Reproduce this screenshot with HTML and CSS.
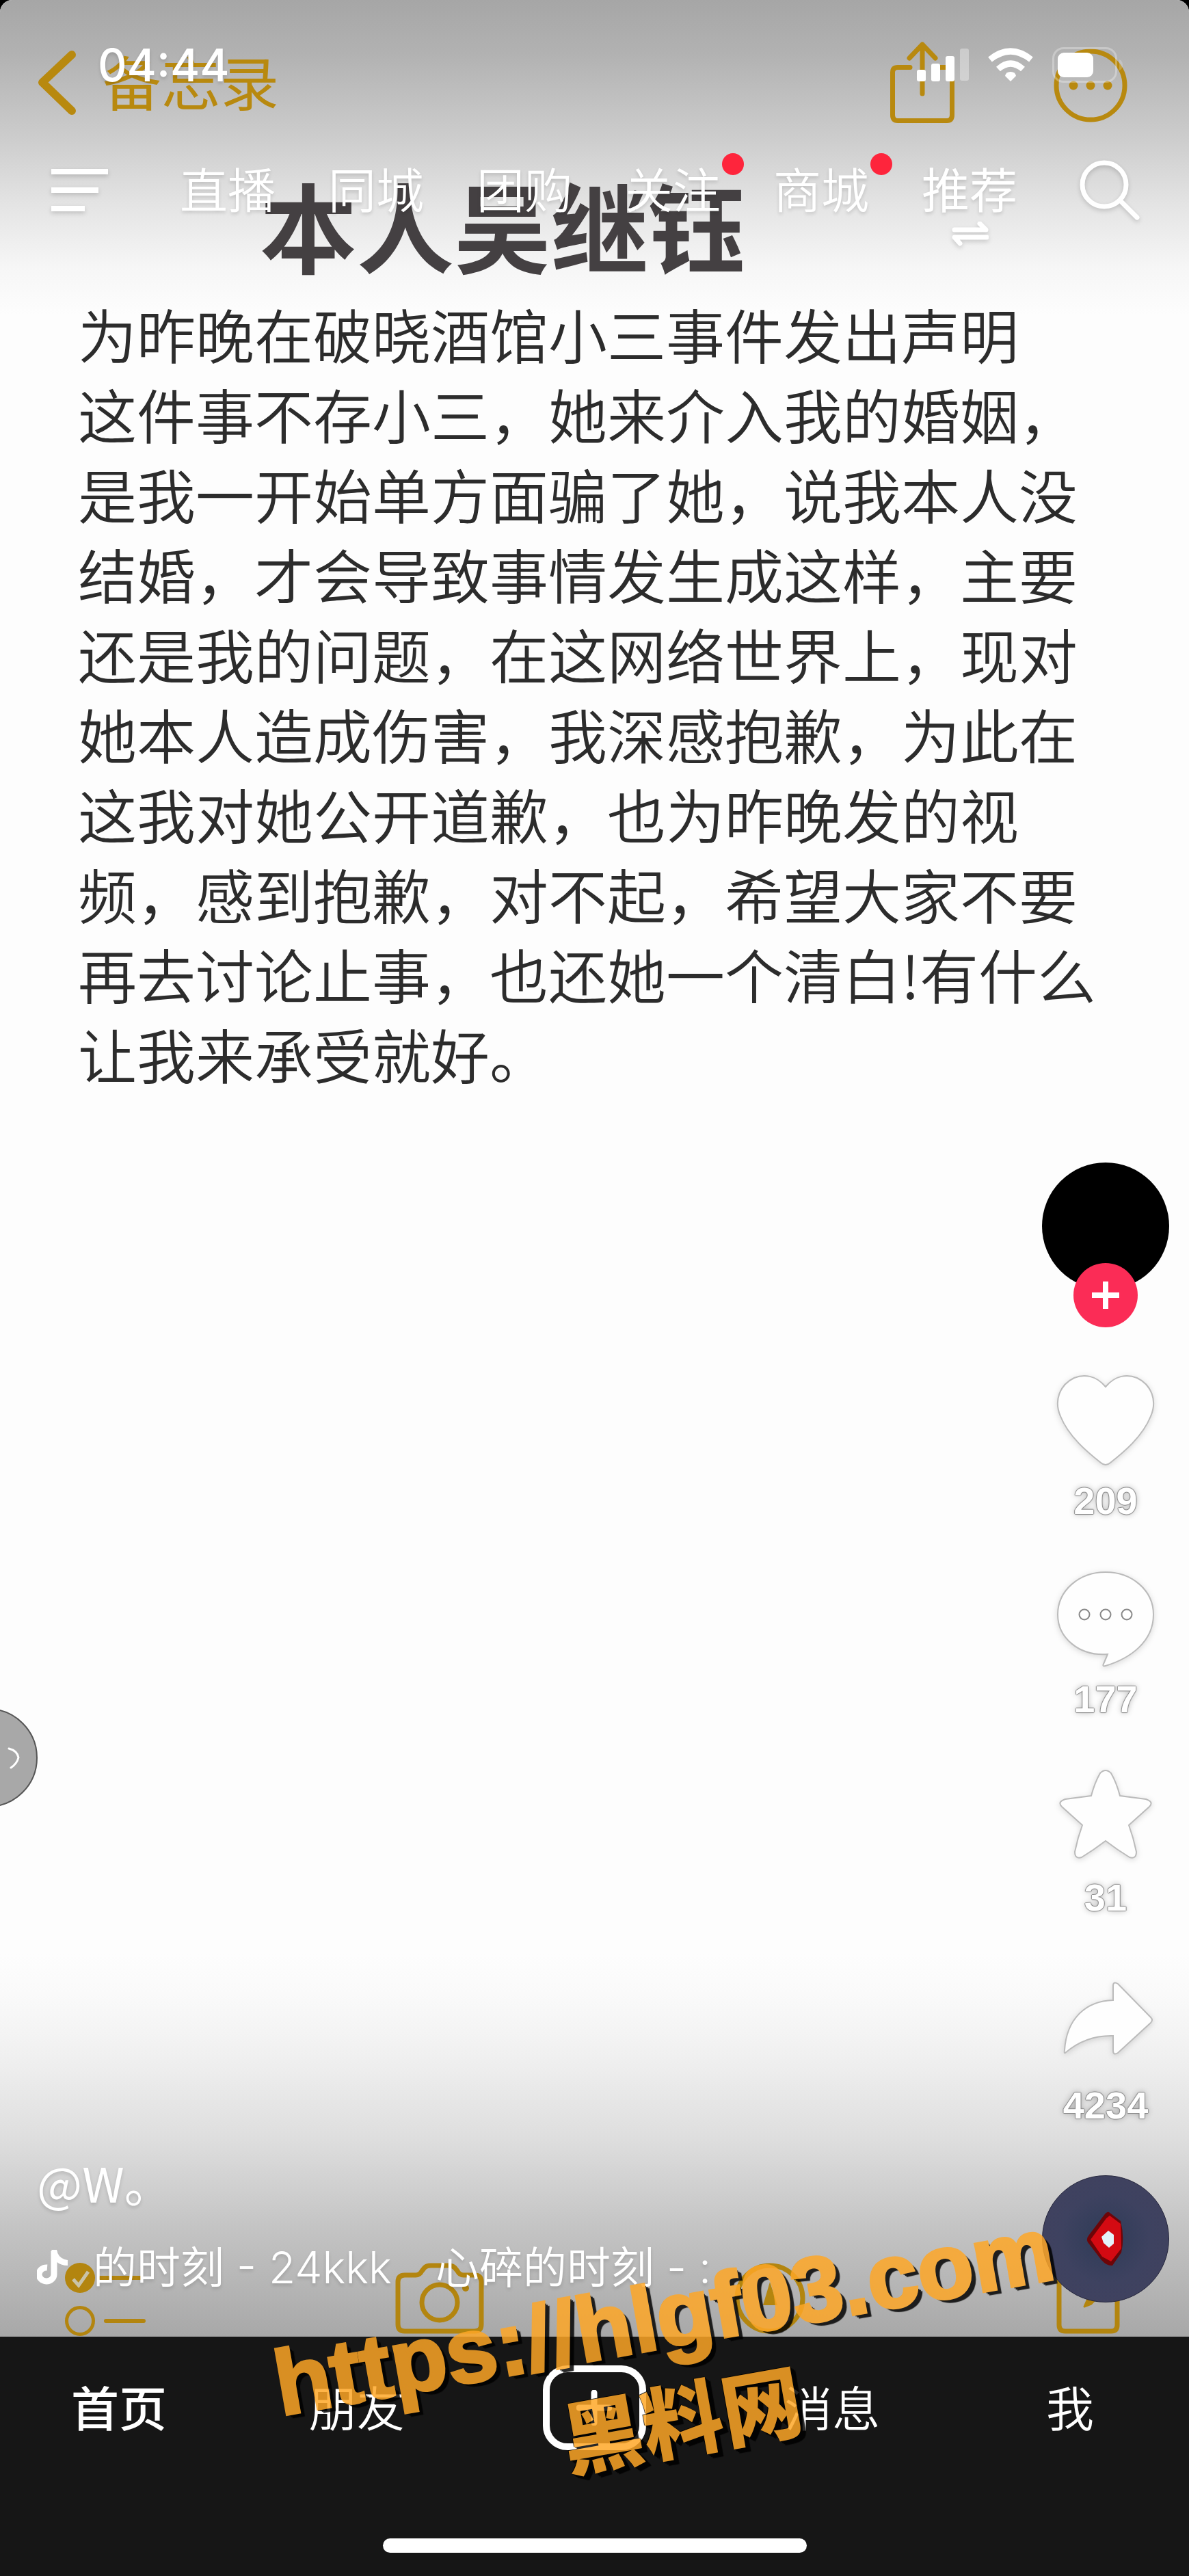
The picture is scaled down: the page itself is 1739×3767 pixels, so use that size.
FILE: index.html
```html
<!DOCTYPE html>
<html lang="zh-CN">
<head>
<meta charset="utf-8">
<meta name="viewport" content="width=device-width, initial-scale=1">
<title>本人吴继钰</title>
<link rel="stylesheet" href="styles.css">
</head>
<body>
<div class="screen">
  <main class="stage">
    <article class="note">
      <header class="note-bar">
        <button class="note-back" type="button">
          <svg width="58" height="96" viewBox="0 0 58 96" aria-hidden="true"><path d="M51 7 8 47.500 51 89" fill="none" stroke="currentColor" stroke-width="12" stroke-linecap="round" stroke-linejoin="round"/></svg>
          <span>备忘录</span>
        </button>
        <div class="note-actions">
          <button type="button" aria-label="分享备忘录">
            <svg width="96" height="120" viewBox="0 0 96 120" fill="none" stroke="currentColor" stroke-width="7" stroke-linecap="round" stroke-linejoin="round" aria-hidden="true"><path d="M30 37.500H12Q4.500 37.500 4.500 45V107Q4.500 115.500 12 115.500H84Q91.500 115.500 91.500 107V45Q91.500 37.500 84 37.500H66"/><path d="M48 76V4M29 24 48 4 67 24"/></svg>
          </button>
          <button type="button" aria-label="更多">
            <svg width="108" height="120" viewBox="0 -10 108 120" aria-hidden="true"><circle cx="54" cy="54" r="50" fill="none" stroke="currentColor" stroke-width="7"/><g fill="currentColor"><circle cx="29" cy="54" r="6.500"/><circle cx="54" cy="54" r="6.500"/><circle cx="79" cy="54" r="6.500"/></g></svg>
          </button>
        </div>
      </header>
      <h1 class="note-title">本人吴继钰</h1>
      <p class="note-text">为昨晚在破晓酒馆小三事件发出声明<br>这件事不存小三，她来介入我的婚姻，<br>是我一开始单方面骗了她，说我本人没<br>结婚，才会导致事情发生成这样，主要<br>还是我的问题，在这网络世界上，现对<br>她本人造成伤害，我深感抱歉，为此在<br>这我对她公开道歉，也为昨晚发的视<br>频，感到抱歉，对不起，希望大家不要<br>再去讨论止事，也还她一个清白!有什么<br>让我来承受就好。</p>
      <footer class="note-tools">
        <button type="button" aria-label="清单">
          <svg width="118" height="108" viewBox="0 0 118 108" fill="none" stroke="currentColor" aria-hidden="true"><circle cx="22" cy="22" r="22" fill="currentColor" stroke="none"/><path d="m12 24 8 9 14-20" stroke="#c9c3a8" stroke-width="5"/><circle cx="22" cy="85" r="19.500" stroke-width="5"/><path d="M52 22H110M60 85H115" stroke-width="6" stroke-linecap="round"/></svg>
        </button>
        <button type="button" aria-label="相机">
          <svg width="130" height="108" viewBox="0 0 130 108" fill="none" stroke="currentColor" stroke-width="7" stroke-linejoin="round" aria-hidden="true"><path d="M14 18H30Q36 18 39 12L43 7Q46 4 52 4H78Q84 4 87 7L91 12Q94 18 100 18H116Q126 18 126 28V90Q126 100 116 100H14Q4 100 4 90V28Q4 18 14 18Z"/><circle cx="65" cy="58" r="26"/><circle cx="103" cy="37" r="5" fill="currentColor" stroke="none"/></svg>
        </button>
        <button type="button" aria-label="标记">
          <svg width="105" height="108" viewBox="0 0 105 108" aria-hidden="true"><circle cx="52" cy="52" r="48" fill="none" stroke="currentColor" stroke-width="7"/><path d="M52 28 42 62H63Z" fill="currentColor"/></svg>
        </button>
        <button type="button" aria-label="新建备忘录">
          <svg width="98" height="108" viewBox="0 0 98 108" fill="none" stroke="currentColor" stroke-width="7" stroke-linecap="round" stroke-linejoin="round" aria-hidden="true"><path d="M56 14H14Q5 14 5 23V91Q5 100 14 100H81Q90 100 90 91V44"/><path d="m90 8-44 47-4 9 10-4 42-44Z" fill="currentColor" stroke-width="3"/></svg>
        </button>
      </footer>
    </article>

    <section class="player" aria-label="视频">
      <div class="status">
        <time class="clock">04:44</time>
        <div class="status-icons">
          <svg width="76" height="50" viewBox="0 0 76 50" fill="#fff" aria-hidden="true"><rect y="32" width="13" height="17" rx="3"/><rect x="21" y="23" width="13" height="26" rx="3"/><rect x="42" y="12" width="13" height="37" rx="3"/><rect x="63" y="1" width="13" height="47" rx="3" opacity=".35"/></svg>
          <svg width="66" height="50" viewBox="0 0 66 50" aria-hidden="true"><g fill="none" stroke="#fff" stroke-width="9"><path d="M3 17Q33-7 63 17"/><path d="M15 31Q33 15 51 31"/></g><path d="M33 49 25 41Q26 35 33 35T41 41Z" fill="#fff"/></svg>
          <svg width="104" height="52" viewBox="0 0 104 52" aria-hidden="true"><rect x="1.500" y="1.500" width="92" height="49" rx="15" fill="none" stroke="#fff" stroke-width="3" opacity=".3"/><path d="M98 18Q103 20 103 26T98 34Z" fill="#fff" opacity=".2"/><rect x="8" y="8" width="52" height="36" rx="9" fill="#fff"/></svg>
        </div>
      </div>

      <div class="feeds">
        <button type="button" aria-label="菜单">
          <svg class="soft" width="83" height="62" viewBox="0 0 83 62" fill="#fff" aria-hidden="true"><path d="M0 0H83V8H0ZM0 27H69V35H0ZM0 54H49V62H0Z"/></svg>
        </button>
        <nav class="feed-list" aria-label="频道">
          <a href="#live">直播</a>
          <a href="#city">同城</a>
          <a href="#deals">团购</a>
          <a class="has-dot" href="#following">关注</a>
          <a class="has-dot" href="#mall">商城</a>
          <a class="is-current" href="#foryou" aria-current="page">推荐
            <svg class="swap soft" width="54" height="36" viewBox="0 0 54 36" fill="none" stroke="#fff" stroke-width="7" stroke-linecap="round" stroke-linejoin="round" aria-hidden="true"><path d="M4 12H50L41 3M51 23H4L12 32"/></svg>
          </a>
        </nav>
        <button class="search" type="button" aria-label="搜索">
          <svg class="soft" width="88" height="90" viewBox="0 0 88 90" fill="none" stroke="#fff" stroke-width="7" stroke-linecap="round" aria-hidden="true"><circle cx="36" cy="37" r="32"/><path d="M60 61 84 85"/></svg>
        </button>
      </div>

      <button class="handle" type="button" aria-label="展开">
        <svg width="18" height="32" viewBox="0 0 18 32" aria-hidden="true"><path d="M2 2Q14 5 16 15 14 24 5 30" fill="none" stroke="#fff" stroke-width="3" stroke-linecap="round"/></svg>
      </button>

      <div class="lower">
        <div class="caption">
          <a class="author" href="#author">@W。</a>
          <a class="music" href="#music">
            <svg width="46" height="52" viewBox="0 0 46 52" aria-hidden="true"><path d="M25 2V36A11 10 0 1 1 15 26" fill="none" stroke="#fff" stroke-width="9"/><path d="M21 0H29Q31 13 45 15V23Q35 23 28 17Z" fill="#fff"/></svg>
            <span>的时刻 - 24kkk</span>
            <span>心碎的时刻 - :</span>
          </a>
        </div>

        <aside class="rail" aria-label="互动">
          <div class="avatar">
            <a class="avatar-pic" href="#author" aria-label="作者主页"></a>
            <button class="follow" type="button" aria-label="关注作者">
              <svg width="40" height="40" viewBox="0 0 40 40" aria-hidden="true"><path d="M20 0V40M0 20H40" stroke="#fff" stroke-width="8"/></svg>
            </button>
          </div>
          <button class="action" type="button" aria-label="点赞 209">
            <svg width="144" height="140" viewBox="0 0 144 140" aria-hidden="true"><path class="shape" d="M72 21C58 4 40 2 26 8 5 18-4 41 6 64 18 94 46 117 65 132Q72 138 79 132C98 117 126 94 138 64 148 41 139 18 118 8 104 2 86 4 72 21Z"/></svg>
            <span>209</span>
          </button>
          <button class="action" type="button" aria-label="评论 177">
            <svg width="144" height="140" viewBox="0 0 144 140" aria-hidden="true"><path class="shape" d="M72 2C111 2 142 29 142 64 142 104 108 128 72 139Q66 141 70 134L75 122C33 125 2 98 2 64 2 29 33 2 72 2Z"/><g fill="#fff" stroke="#888" stroke-width="2"><circle cx="41" cy="64" r="7.500"/><circle cx="72" cy="64" r="7.500"/><circle cx="103" cy="64" r="7.500"/></g></svg>
            <span>177</span>
          </button>
          <button class="action" type="button" aria-label="收藏 31">
            <svg width="144" height="140" viewBox="0 0 144 140" aria-hidden="true"><path class="shape" d="M64 6Q72-2 80 6 88 20 93 39L131 44Q143 48 136 55L106 82Q113 101 117 121 117 132 107 129 89 118 72 105 55 118 37 129 27 132 27 121 31 101 38 82L8 55Q1 48 13 44L51 39Q56 20 64 6Z"/></svg>
            <span>31</span>
          </button>
          <button class="action" type="button" aria-label="分享 4234">
            <svg width="144" height="154" viewBox="0 0 144 154" aria-hidden="true"><path class="shape" d="M83 27Q83 20 90 24L138 73Q142 77 138 81L90 125Q83 129 83 122V100Q43 99 13 125 11 126 12 121C15 75 43 49 83 48Z"/></svg>
            <span>4234</span>
          </button>
          <a class="disc" href="#music" aria-label="原声">
            <svg width="56" height="80" viewBox="0 0 56 80" aria-hidden="true"><path d="M33 1 50 14Q56 38 51 60L38 79Q30 80 22 71L2 45Q-1 40 4 34L26 5Q30 0 33 1Z" fill="#6d0508"/><path d="M34 6 50 18 51 54 36 73 23 66 6 41 29 10Z" fill="#d40a12"/><path d="M22 37 32 28 40 34V47L33 53 25 46Z" fill="#e3f3fa"/></svg>
          </a>
        </aside>
      </div>
    </section>
  </main>

  <nav class="tabbar" aria-label="主导航">
    <div class="tabs">
      <a class="is-current" href="#home" aria-current="page">首页</a>
      <a href="#friends">朋友</a>
      <button class="create" type="button" aria-label="发布">
        <svg width="52" height="52" viewBox="0 0 52 52" aria-hidden="true"><path d="M26 4V48M4 26H48" stroke="#fff" stroke-width="9" stroke-linecap="round"/></svg>
      </button>
      <a href="#inbox">消息</a>
      <a href="#me">我</a>
    </div>
    <div class="home-indicator"></div>
  </nav>

  <div class="watermark"><span class="watermark-url">https://hlgf03.com</span><span class="watermark-name">黑料网</span></div>
</div>
</body>
</html>
```

FILE: styles.css
```css
* {
  box-sizing: border-box;
}

html {
  background: #000;
}

body {
  margin: 0;
  color: #fff;
  font-family: "Noto Sans CJK SC", sans-serif;
}

h1,
p {
  margin: 0;
}

a {
  color: inherit;
  text-decoration: none;
}

button {
  padding: 0;
  border: 0;
  background: none;
  color: inherit;
  font: inherit;
  cursor: pointer;
}

svg {
  display: block;
}

.soft {
  filter: drop-shadow(0 3px 3px rgba(0, 0, 0, 0.16));
}

.screen {
  position: relative;
  display: grid;
  grid-template-rows: 1fr auto;
  min-height: 100vh;
  overflow: hidden;
  border-radius: 18px 18px 0 0;
  background: #fdfdfd;
}

/* The shared note and the player controls occupy the same cell. */
.stage {
  display: grid;
  grid-template-columns: minmax(0, 1fr);
}

.note,
.player {
  grid-area: 1 / 1;
  display: flex;
  flex-direction: column;
}

/* Note */

.note {
  background:
    linear-gradient(#a6a6a6 0, #b2b2b2 80px, #cccccc 200px, #e4e4e4 300px, #f6f6f6 390px, rgba(253, 253, 253, 0) 460px) top / 100% 460px no-repeat,
    linear-gradient(rgba(253, 253, 253, 0) 0, #fafafa 60px, #f0f0f0 150px, #dedede 270px, #c4c4c4 400px, #a8a8a8 560px) bottom / 100% 560px no-repeat;
}

.note-bar {
  display: flex;
  align-items: center;
  justify-content: space-between;
  height: 256px;
  padding: 0 90px 14px 54px;
  color: #b8890f;
}

.note-back {
  display: flex;
  align-items: center;
  gap: 38px;
  font-size: 86px;
  line-height: 96px;
}

.note-back span {
  padding-bottom: 6px;
}

.note-actions {
  display: flex;
  align-items: center;
  gap: 144px;
}

.note-title {
  padding-left: 380px;
  color: #444042;
  font-size: 142px;
  font-weight: 700;
  line-height: 142px;
}

.note-text {
  padding: 31px 0 0 114px;
  color: #2c2c2c;
  font-size: 86px;
  font-weight: 350;
  line-height: 117px;
  white-space: nowrap;
}

.note-tools {
  display: flex;
  justify-content: space-between;
  margin-top: auto;
  padding: 0 97px 0 95px;
  color: #b3850f;
}

/* Player */

.player {
  position: relative;
  text-shadow: 0 3px 5px rgba(0, 0, 0, 0.14);
}

.status {
  display: flex;
  align-items: center;
  justify-content: space-between;
  padding: 61px 96px 0 143px;
}

.clock {
  font-family: Inter, sans-serif;
  font-size: 66px;
  font-weight: 500;
  line-height: 68px;
}

.status-icons {
  display: flex;
  align-items: center;
  gap: 28px;
}

.feeds {
  display: flex;
  align-items: center;
  height: 100px;
  margin-top: 99px;
  padding: 0 72px 0 75px;
}

.feed-list {
  display: flex;
  gap: 77px;
  margin: 0 auto 0 105px;
  padding-bottom: 6px;
  font-size: 70px;
  font-weight: 350;
  line-height: 80px;
}

.feed-list a {
  position: relative;
  white-space: nowrap;
}

.feed-list .is-current {
  font-weight: 400;
}

.has-dot::after {
  position: absolute;
  top: -11px;
  right: -34px;
  width: 32px;
  height: 32px;
  border-radius: 50%;
  background: #fe253c;
  content: "";
}

.swap {
  position: absolute;
  top: 89px;
  left: 44px;
}

.handle {
  position: absolute;
  bottom: 774px;
  left: -90px;
  display: flex;
  align-items: center;
  justify-content: flex-end;
  width: 145px;
  height: 145px;
  padding-right: 24px;
  border: 2px solid #555;
  border-radius: 50%;
  background: #a8a8a8;
}

.lower {
  display: flex;
  align-items: flex-end;
  justify-content: space-between;
  margin-top: auto;
  padding: 0 29px 50px 54px;
}

.caption {
  display: flex;
  flex-direction: column;
  gap: 53px;
  padding-bottom: 19px;
  white-space: nowrap;
}

.author {
  font-size: 70px;
  line-height: 80px;
}

.music {
  display: flex;
  align-items: center;
  gap: 64px;
  font-family: Inter, "Noto Sans CJK SC", sans-serif;
  font-size: 64px;
  font-weight: 350;
  line-height: 64px;
}

.music svg {
  margin-right: -28px;
}

.rail {
  display: flex;
  flex-direction: column;
  align-items: center;
  gap: 72px;
  width: 186px;
}

.avatar {
  position: relative;
  width: 186px;
  height: 235px;
}

.avatar-pic {
  display: block;
  height: 186px;
  border-radius: 50%;
  background: #000;
}

.follow {
  position: absolute;
  bottom: -6px;
  left: 46px;
  display: grid;
  place-items: center;
  width: 94px;
  height: 94px;
  border-radius: 50%;
  background: #fb2c56;
}

.action {
  display: flex;
  flex-direction: column;
  align-items: center;
  gap: 18px;
  font-family: "Liberation Sans", sans-serif;
  font-size: 56px;
  font-weight: 700;
  line-height: 60px;
  text-shadow:
    1px 0 1px #888,
    -1px 0 1px #888,
    0 1px 1px #888,
    0 -1px 1px #888,
    0 0 10px rgba(0, 0, 0, 0.3);
}

.action svg {
  overflow: visible;
  filter: drop-shadow(0 2px 4px rgba(0, 0, 0, 0.14));
}

.shape {
  fill: #fefefe;
  stroke: #bbb;
  stroke-width: 2;
}

.disc {
  display: grid;
  place-items: center;
  width: 186px;
  height: 186px;
  border: 1px solid #24253b;
  border-radius: 50%;
  background: radial-gradient(circle, #2e3b57 0, #3e4260 50%, #41415e 100%);
}

/* Bottom navigation */

.tabbar {
  height: 350px;
  padding-bottom: 34px;
  display: flex;
  flex-direction: column;
  align-items: center;
  justify-content: space-between;
  background: #161616;
}

.tabs {
  display: grid;
  grid-template-columns: repeat(5, 1fr);
  align-items: center;
  justify-items: center;
  width: 100%;
  height: 208px;
  font-size: 70px;
  font-weight: 350;
  line-height: 80px;
}

.tabs a {
  padding-bottom: 4px;
}

.tabs .is-current {
  font-weight: 500;
}

.create {
  display: grid;
  place-items: center;
  width: 151px;
  height: 124px;
  border: 10px solid #fff;
  border-radius: 36px;
}

.home-indicator {
  width: 620px;
  height: 21px;
  border-radius: 11px;
  background: #fff;
}

/* Site stamp laid over the frame */

.watermark {
  position: absolute;
  bottom: 163px;
  left: 56.5%;
  display: flex;
  flex-direction: column;
  align-items: center;
  color: #ffa726;
  font-weight: 700;
  line-height: 140px;
  white-space: nowrap;
  opacity: 0.84;
  pointer-events: none;
  transform: translateX(-50%) rotate(-10deg);
  text-shadow:
    -1px -1px 0 #000,
    1px 1px 0 #000,
    3px 3px 0 #000,
    5px 5px 0 #000,
    7px 7px 1px #000;
}

.watermark-url {
  font-family: "Liberation Sans", sans-serif;
  font-size: 134px;
  line-height: 156px;
  -webkit-text-stroke: 4px #ffa726;
}

.watermark-name {
  font-size: 118px;
  font-weight: 900;
}
```
